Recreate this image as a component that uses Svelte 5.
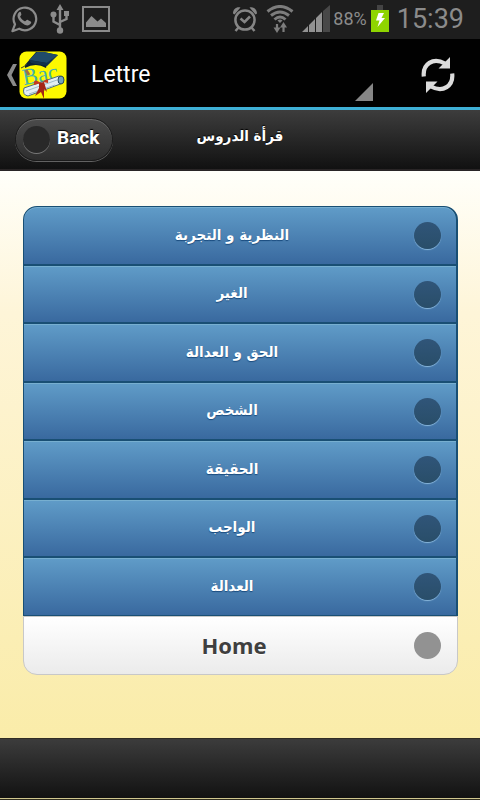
<script>
  const lessons = [
    'النظرية و التجربة',
    'الغير',
    'الحق و العدالة',
    'الشخص',
    'الحقيقة',
    'الواجب',
    'العدالة'
  ];
</script>

<div class="screen">
  <div class="status">
    <svg class="whatsapp" width="28" height="28" viewBox="0 0 28 28" aria-hidden="true">
      <path d="M2.400 26.200L5 19.400A11.300 11.300 0 1 1 9.200 23.700Z" fill="none" stroke="#8b8b8b" stroke-width="2.200" stroke-linejoin="round" />
      <path d="M10.800 7.200c-.6-.6-1.400-.5-2 .2-3 3.200-.2 7.600 3 10.400 3.200 2.700 7 3.800 9 .8.6-1 .5-1.800-.2-2.200l-2.800-1.500c-.7-.3-1.200 0-1.700.7-.6.8-1 .9-1.800.5-1.800-1-3.100-2.300-4-4-.3-.7 0-1 .6-1.600.5-.5.6-.9.4-1.500z" fill="#8b8b8b" />
    </svg>
    <svg class="usb" width="20" height="30" viewBox="0 0 20 30" aria-hidden="true">
      <path d="M10 4V26M10 21L3.500 17.500V11M10 18L16.500 15V10" fill="none" stroke="#8b8b8b" stroke-width="2.400" />
      <path d="M10 0L13.500 6H6.500ZM14 7h5v5h-5z" fill="#8b8b8b" />
      <circle cx="3.500" cy="10.500" r="3" fill="#8b8b8b" />
      <circle cx="10" cy="26.500" r="3.200" fill="#8b8b8b" />
    </svg>
    <svg class="photo" width="28" height="26" viewBox="0 0 28 26" aria-hidden="true">
      <rect x="1" y="1" width="26" height="24" fill="none" stroke="#8b8b8b" stroke-width="2" />
      <path d="M4 21V16.500L9.500 10L15.500 15.500L19 12.500L24 17V21Z" fill="#8b8b8b" />
    </svg>
    <span class="space"></span>
    <svg class="alarm" width="26" height="28" viewBox="0 0 26 28" aria-hidden="true">
      <circle cx="13" cy="15" r="9.600" fill="none" stroke="#858585" stroke-width="2.500" />
      <path d="M8.500 13.500L12.500 17L18 11.500M6.500 22.500L3.500 26M19.500 22.500L22.500 26" fill="none" stroke="#858585" stroke-width="2.500" />
      <path d="M1 8.500C1 4 4.500 1.500 8.500 2.500L2.500 9.500ZM25 8.500C25 4 21.500 1.500 17.500 2.500L23.500 9.500Z" fill="#858585" />
    </svg>
    <svg class="wifi" width="28" height="28" viewBox="0 0 28 28" aria-hidden="true">
      <path d="M1.500 6.500Q14-3.500 26.500 6.500M5 10.500Q14 3.500 23 10.500M8.500 14.500Q14 9.500 19.500 14.500" fill="none" stroke="#7d7d7d" stroke-width="3" />
      <path d="M11.500 15.500Q14 13.500 16.500 15.500L14 18Z" fill="#7d7d7d" />
      <path d="M11 19V23M17.500 27V22" stroke="#7d7d7d" stroke-width="2.200" />
      <path d="M7.500 22.500H14.500L11 28ZM14 22.500H21L17.500 17Z" fill="#7d7d7d" />
    </svg>
    <svg class="signal" width="28" height="27" viewBox="0 0 28 27" aria-hidden="true">
      <path d="M0 27L6 21V27ZM7 20L13 14V27H7ZM14 13L20 7V27H14Z" fill="#929292" />
      <path d="M21 6L28 0V27H21Z" fill="#484848" />
    </svg>
    <span class="percent">88%</span>
    <svg class="battery" width="18" height="27" viewBox="0 0 18 27" aria-hidden="true">
      <rect x="6" width="6" height="5" fill="#444" />
      <rect y="5" width="18" height="22" fill="#8fd400" />
      <path d="M7.500 8H13L10.500 13H14L6.500 22L8.500 15.500H5Z" fill="#fff" />
    </svg>
    <span class="time">15:39</span>
  </div>

  <div class="actionbar">
    <button class="up" aria-label="Navigate up">
      <svg width="10" height="22" viewBox="0 0 10 22" aria-hidden="true">
        <path d="M6 0H10L4.500 11L10 22H6L0 11Z" fill="#8a8a8a" />
      </svg>
      <svg class="logo" width="48" height="48" viewBox="0 0 48 48" aria-hidden="true">
        <rect x="0.500" y="0.500" width="47" height="47" rx="7" fill="#fdf900" />
        <path d="M6 14L17 1H25L39 4L28 13L27 17Q17 11 6 17Z" fill="#0c2234" />
        <path d="M10 9L18 1H25L39 4L28 12Z" fill="#204b69" />
        <path d="M10 9L28 12L39 4L28 15L12 12Z" fill="#14324a" />
        <text x="4" y="31" font-family="Liberation Serif, serif" font-size="23" fill="#45b3a6" transform="rotate(-10 22 28)">Bac</text>
        <path d="M8 13Q5 16 2 17" fill="none" stroke="#3e4422" />
        <path d="M7 19L10 24" stroke="#a06d4a" stroke-width="3" />
        <path d="M5 37L40 25Q45 25 44 32L9 45Q3 44 5 37Z" fill="#e3eef2" stroke="#496b7c" />
        <ellipse cx="42" cy="29" rx="3" ry="4" fill="#75a5bc" stroke="#28485a" />
        <path d="M7 40L38 29M10 43L36 34" stroke="#9ebcc8" />
        <path d="M20 32L25 31L28 41L25 38L25 48L22 41L16 45L20 37Z" fill="#a32616" />
        <path d="M22 32Q14 26 15 34ZM24 31Q30 25 29 32Z" fill="#c73a1d" />
      </svg>
    </button>
    <button class="spinner">
      <span>Lettre</span>
      <svg width="18" height="18" viewBox="0 0 18 18" aria-hidden="true"><path d="M18 0V18H0Z" fill="#868686" /></svg>
    </button>
    <button class="refresh" aria-label="Refresh">
      <svg width="34" height="36" viewBox="0 0 34 36" aria-hidden="true">
        <path d="M2.800 19.500C1.500 7 12 0 24 6.500M31.200 16.500C32.500 29 22 36 10 29.500" fill="none" stroke="#dcdcdc" stroke-width="4.200" />
        <path d="M29 0V11.500H17.500ZM5 36V24.500H16.500Z" fill="#dcdcdc" />
      </svg>
    </button>
  </div>

  <header>
    <a class="back" href="#back"><span class="dot"></span>Back</a>
    <h1 dir="rtl" lang="ar">قرأة الدروس</h1>
  </header>

  <main>
    <nav>
      {#each lessons as lesson, i}
        <a class="item" href="#lesson-{i + 1}"><span dir="rtl" lang="ar">{lesson}</span><i class="dot"></i></a>
      {/each}
      <a class="item home" href="#home"><span>Home</span><i class="dot"></i></a>
    </nav>
  </main>

  <footer></footer>
</div>

<style>
  :global(body) {
    margin: 0;
    background: #fbeca6;
  }
  .screen {
    display: flex;
    flex-direction: column;
    min-height: 100vh;
    font-family: Roboto, "DejaVu Sans", sans-serif;
  }
  svg {
    display: block;
    flex: none;
  }
  button {
    border: 0;
    padding: 0;
    background: none;
    color: #fff;
    font: inherit;
  }
  a {
    text-decoration: none;
  }
  .status {
    display: flex;
    align-items: center;
    box-sizing: border-box;
    height: 39px;
    padding: 0 16px 2px 10px;
    background: #1e1e1e;
    color: #8b8b8b;
  }
  .usb,
  .photo {
    margin-left: 12px;
  }
  .space {
    flex: 1;
  }
  .wifi,
  .signal {
    margin-left: 8px;
  }
  .percent {
    margin-left: 3px;
    font-size: 18px;
  }
  .battery {
    margin: 0 8px 0 4px;
  }
  .time {
    font-size: 27px;
  }
  .actionbar {
    display: flex;
    align-items: center;
    height: 65px;
    padding: 3px 25px 0 0;
    border-bottom: 3px solid #3fb0d6;
    background: #010101;
  }
  .up {
    display: flex;
    align-items: center;
    gap: 2px;
    padding-left: 7px;
  }
  .spinner {
    display: flex;
    flex: 1;
    align-items: center;
    justify-content: space-between;
    height: 65px;
    margin: 0 48px 0 24px;
    font-size: 23px;
  }
  .spinner svg {
    align-self: flex-end;
    margin-bottom: 6px;
  }
  header {
    display: grid;
    grid-template-columns: 1fr auto 1fr;
    align-items: center;
    box-sizing: border-box;
    height: 61px;
    padding: 0 15px;
    border-bottom: 2px solid #292526;
    background: linear-gradient(#3d3d3d, #111);
    color: #fff;
    text-shadow: 0 -1px 1px #000;
  }
  .back {
    display: flex;
    justify-self: start;
    align-items: center;
    gap: 7px;
    box-sizing: border-box;
    height: 43px;
    padding: 0 13px 4px 7px;
    border: 1px solid #1b1b1b;
    border-radius: 22px;
    background: linear-gradient(#4b4b4b, #2d2d2d);
    box-shadow: inset 0 1px 0 #686868, 0 1px 0 #626262;
    color: #fff;
    font-size: 19px;
    font-weight: 700;
  }
  .dot {
    box-sizing: border-box;
    width: 27px;
    height: 27px;
    border-radius: 50%;
    background: #292929;
    box-shadow: 0 1px 0 #777;
  }
  .back .dot {
    margin-top: 4px;
  }
  h1 {
    margin: 0;
    padding-bottom: 8px;
    font-family: "DejaVu Sans Condensed", "DejaVu Sans", sans-serif;
    font-size: 15px;
    line-height: 24px;
  }
  main {
    flex: 1;
    padding: 35px 22px 63px 23px;
    background: linear-gradient(#fffffa, #fef5d8 25%, #faeca9);
  }
  nav {
    display: flex;
    flex-direction: column;
  }
  .item {
    display: grid;
    grid-template-columns: 1fr 27px;
    gap: 15px;
    align-items: center;
    box-sizing: border-box;
    height: 58px;
    padding: 0 15px 0 41px;
    border: solid #194f74;
    border-width: 1px 2px 1px 1px;
    background: linear-gradient(#609cc8, #39699f);
    box-shadow: inset 0 1px 0 #77afd0;
    color: #fff;
    font-family: "DejaVu Sans Condensed", "DejaVu Sans", sans-serif;
    font-size: 15px;
    font-weight: 700;
    text-align: center;
    text-shadow: 0 1px 1px #194b7e;
  }
  .item:nth-child(odd) {
    height: 59px;
  }
  .item:first-child {
    border-radius: 14px 14px 0 0;
  }
  .item span {
    padding-bottom: 2px;
    line-height: 24px;
  }
  .item .dot {
    background: linear-gradient(#305579, #294e69);
    box-shadow: 0 1px 1px #8ab8dc;
  }
  .item.home {
    height: 59px;
    padding-right: 16px;
    padding-left: 45px;
    border-color: #c8c8c8;
    border-width: 1px;
    border-radius: 0 0 14px 14px;
    background: linear-gradient(#fff, #ebebeb);
    box-shadow: inset 0 1px 0 #fff;
    color: #3f3f3f;
    font-family: "Noto Sans", sans-serif;
    font-size: 22px;
    text-shadow: 0 1px 0 #fff;
  }
  .item.home .dot {
    background: #929292;
    box-shadow: none;
  }
  footer {
    box-sizing: border-box;
    height: 62px;
    border-top: 1px solid #302d24;
    border-bottom: 1px solid #302d1c;
    background: linear-gradient(#3c3c3c, #111);
    box-shadow: inset 0 -1px 0 #cfc68f;
  }
</style>
